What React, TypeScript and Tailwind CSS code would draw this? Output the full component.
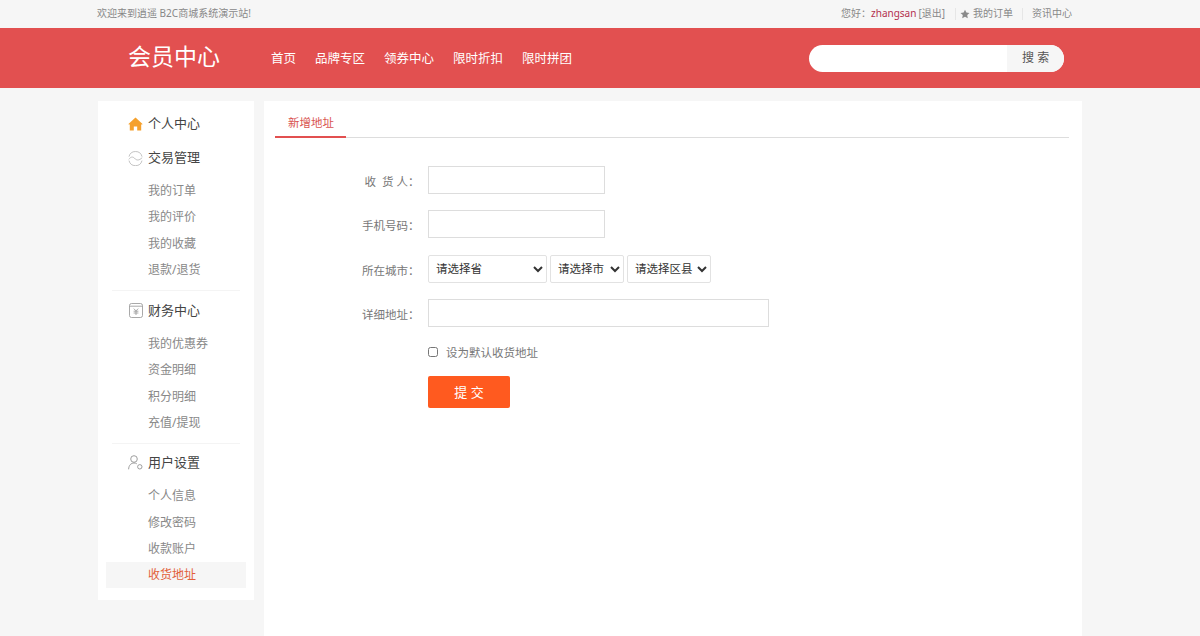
import React from "react";

const font = { fontFamily: '"Noto Sans", "Noto Sans CJK SC", sans-serif' };

function HomeIcon() {
  return (
    <svg width="15" height="14" viewBox="0 0 15 14" className="shrink-0">
      <path fillRule="evenodd" d="M7.5 0.4 L14.8 7.2 L13.2 7.6 L13.2 13.6 L1.8 13.6 L1.8 7.6 L0.2 7.2 Z M5.8 9.6 L5.8 13.6 L9.2 13.6 L9.2 9.6 Z" fill="#f5a02c" />
    </svg>
  );
}
function TradeIcon() {
  return (
    <svg width="15" height="15" viewBox="0 0 15 15" fill="none" stroke="#b4b4b4" strokeWidth="0.8" className="shrink-0">
      <path d="M1 5.6 A6.7 6.7 0 0 1 14 5.6" />
      <path d="M14 9.6 A6.7 6.7 0 0 1 1 9.6" />
      <path d="M0.8 8.4 C2.5 6 4.5 5.2 6.5 7.2 C8.5 9.6 11 9.8 14.2 6.6" />
    </svg>
  );
}
function FinanceIcon() {
  return (
    <svg width="14" height="15" viewBox="0 0 14 15" fill="none" stroke="#9a9a9a" strokeWidth="0.85" className="shrink-0">
      <rect x="0.5" y="0.5" width="13" height="14" rx="2" />
      <path d="M0.5 3.2 H13.5" />
      <path d="M4.8 5.6 L7 7.9 L9.2 5.6 M4.6 8.2 H9.4 M4.6 10 H9.4 M7 7.9 V12" />
    </svg>
  );
}
function UserIcon() {
  return (
    <svg width="15" height="15" viewBox="0 0 15 15" fill="none" stroke="#8e8e8e" strokeWidth="0.85" className="shrink-0">
      <circle cx="6" cy="4" r="3.3" />
      <path d="M0.6 14.3 C0.8 10.3 3 8 6 8 C7 8 8 8.2 8.8 8.8" />
      <circle cx="11.8" cy="11.8" r="2.2" />
    </svg>
  );
}
function StarIcon() {
  return (
    <svg width="10" height="10" viewBox="0 0 24 24" fill="#8a8a8a" className="shrink-0">
      <path d="M12 1.5l3.3 6.9 7.5 1-5.5 5.2 1.4 7.5L12 18.5l-6.7 3.6 1.4-7.5L1.2 9.4l7.5-1z" />
    </svg>
  );
}

function SideHead({ icon, label }: { icon: React.ReactNode; label: string }) {
  return (
    <div className="h-[34px] flex items-center pl-[22px] gap-[5px] text-[13px] text-[#444]">
      <span className="w-[15px] flex justify-center">{icon}</span>
      <span>{label}</span>
    </div>
  );
}

function SideItem({ label, active }: { label: string; active?: boolean }) {
  return (
    <div className={"h-[26.2px] flex items-center pl-[42px] text-[12px] " + (active ? "bg-[#f6f6f6] text-[#e2603a]" : "text-[#888]")}>
      {label}
    </div>
  );
}

function Row({ label, children, className }: { label: React.ReactNode; children: React.ReactNode; className?: string }) {
  return (
    <div className={"flex items-center " + (className ?? "")}>
      <div className="w-[144.5px] mr-[-4.5px] pt-[3px] text-right text-[11.5px] text-[#777] whitespace-pre">{label}</div>
      {children}
    </div>
  );
}

const inputCls = "h-[28px] border border-[#dddddd] bg-white outline-none ml-[13px] box-border";
const selCls = "h-[28px] border border-[#e2e2e2] rounded-[2px] bg-white text-[11.5px] text-[#333] pl-[3px]";

export default function App() {
  return (
    <div className="min-h-[636px] h-[636px] overflow-hidden bg-[#f6f6f6]" style={font}>
      <div className="h-[27px] flex items-center justify-between pl-[97px] pr-[128px] text-[10px] text-[#888]">
        <span>欢迎来到逍遥 B2C商城系统演示站!</span>
        <div className="flex items-center">
          <span>您好：</span>
          <span className="text-[#b3304f]">zhangsan</span>
          <span className="ml-[2px]">[退出]</span>
          <span className="w-px h-[12px] bg-[#e6e6e6] ml-[10px]" />
          <span className="ml-[4px]"><StarIcon /></span>
          <span className="ml-[3px]">我的订单</span>
          <span className="w-px h-[12px] bg-[#e6e6e6] ml-[9px]" />
          <span className="ml-[9px]">资讯中心</span>
        </div>
      </div>

      <div className="mt-[1px] h-[60px] bg-[#e25050] flex items-center text-white">
        <div className="ml-[128px] w-[143px] mb-[3px] text-[23px] leading-none">会员中心</div>
        <nav className="flex gap-[19px] pt-[2px] text-[12.5px]">
          <span>首页</span>
          <span>品牌专区</span>
          <span>领券中心</span>
          <span>限时折扣</span>
          <span>限时拼团</span>
        </nav>
        <div className="ml-[237px] w-[255px] h-[27px] rounded-full bg-white flex overflow-hidden">
          <div className="flex-1" />
          <div className="w-[57px] bg-[#f6f6f6] text-[#555] text-[12px] flex items-center justify-center">搜 索</div>
        </div>
      </div>

      <div className="flex items-start mt-[13px] ml-[98px] gap-[10px]">
        <aside className="w-[156px] h-[499px] bg-white pt-[6px] px-[8px]">
          <SideHead icon={<HomeIcon />} label="个人中心" />
          <SideHead icon={<TradeIcon />} label="交易管理" />
          <div className="pt-[3.15px]">
            <SideItem label="我的订单" />
            <SideItem label="我的评价" />
            <SideItem label="我的收藏" />
            <SideItem label="退款/退货" />
          </div>
          <div className="mx-[6px] mt-[7px] border-t border-[#f4f4f4]" />
          <div className="mt-[3px]"><SideHead icon={<FinanceIcon />} label="财务中心" /></div>
          <div className="pt-[3.15px]">
            <SideItem label="我的优惠券" />
            <SideItem label="资金明细" />
            <SideItem label="积分明细" />
            <SideItem label="充值/提现" />
          </div>
          <div className="mx-[6px] mt-[7px] border-t border-[#f4f4f4]" />
          <div className="mt-[2px]"><SideHead icon={<UserIcon />} label="用户设置" /></div>
          <div className="pt-[3.6px]">
            <SideItem label="个人信息" />
            <SideItem label="修改密码" />
            <SideItem label="收款账户" />
            <SideItem label="收货地址" active />
          </div>
        </aside>

        <main className="w-[818px] h-[560px] bg-white pt-[9px] px-[11px]">
          <div className="border-b border-[#dddddd] w-[794px] h-[28px]">
            <div className="w-[71px] h-[28px] border-b-2 border-[#e25050] text-[11.5px] text-[#d9534f] pl-[13px] leading-[26px]">新增地址</div>
          </div>
          <form className="pt-[28px]">
            <Row label="收  货 人：" className="mb-[16.4px]"><input className={inputCls + " w-[177px]"} /></Row>
            <Row label="手机号码：" className="mb-[16.4px]"><input className={inputCls + " w-[177px]"} /></Row>
            <Row label="所在城市：" className="mb-[16.4px]">
              <div className="flex ml-[13px] gap-[3px]">
                <select className={selCls + " w-[119px]"}><option>请选择省</option></select>
                <select className={selCls + " w-[74px]"}><option>请选择市</option></select>
                <select className={selCls + " w-[84px]"}><option>请选择区县</option></select>
              </div>
            </Row>
            <Row label="详细地址：" className="mb-[16.4px]"><input className={inputCls + " w-[341px]"} /></Row>
            <Row label="" className="mb-[15.5px]">
              <label className="ml-[13px] flex items-center text-[11.5px] text-[#777]">
                <input type="checkbox" className="w-[10px] h-[10px] m-0" />
                <span className="ml-[8px]">设为默认收货地址</span>
              </label>
            </Row>
            <Row label="">
              <button type="button" className="ml-[13px] w-[82px] h-[32px] bg-[#ff5a1f] rounded-[2px] text-white text-[13px]">提 交</button>
            </Row>
          </form>
        </main>
      </div>
    </div>
  );
}
